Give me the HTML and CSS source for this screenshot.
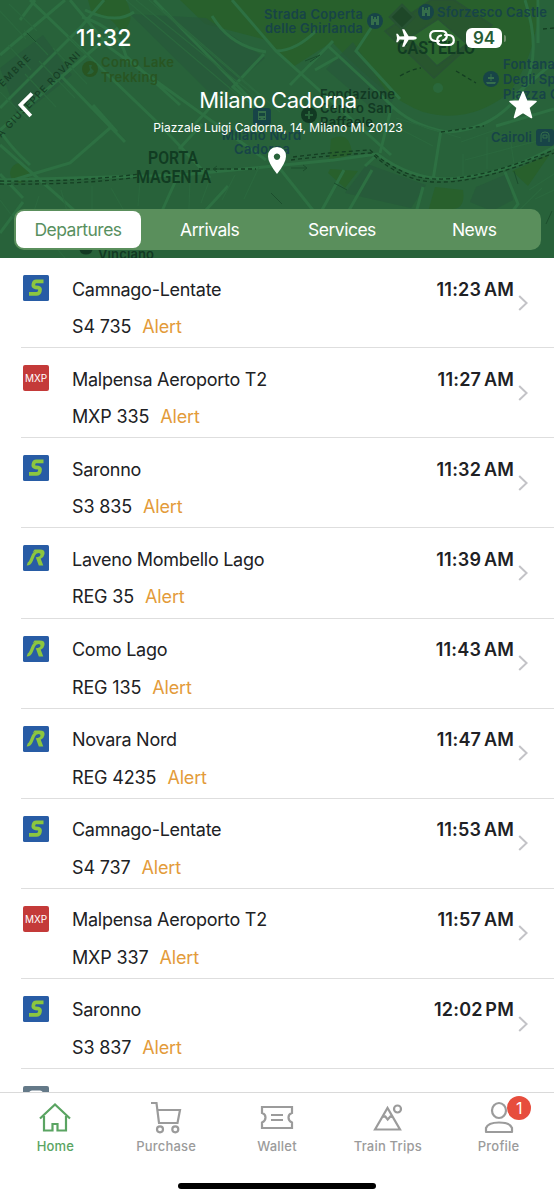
FILE: index.html
```
<!DOCTYPE html>
<html lang="en">
<head>
<meta charset="utf-8">
<title>Milano Cadorna</title>
<link rel="stylesheet" href="styles.css">
</head>
<body>
<svg width="0" height="0" class="symbols" aria-hidden="true">
  <symbol id="chevron" viewBox="0 0 10 18"><path d="M1.2 2 L8.600 9 L1.200 16" fill="none" stroke="#c3c3c7" stroke-width="2"/></symbol>
  <symbol id="line-s" viewBox="0 0 26 26"><rect width="26" height="26" rx="1.5" fill="#285ca5"/><path d="M20.500 6.400 H13.200 Q11 6.400 10.400 9.300 Q9.800 12 12.600 12.300 L15.200 12.700 Q17.600 13.100 16.900 15.800 Q16.300 18.800 13.500 18.800 H6" fill="none" stroke="#8cc63f" stroke-width="3.700"/></symbol>
  <symbol id="line-r" viewBox="0 0 26 26"><rect width="26" height="26" rx="1.5" fill="#285ca5"/><path d="M11.500 4.600 H17 Q22.200 4.600 21.500 9 Q20.900 12.500 17.700 13.800 L20.300 20.600 H15.800 L12.800 12.200 Q17.200 12 17.500 9.800 Q17.700 8 15.500 8 Q13 8 12 10.500 L9.700 16 Q7.800 20.600 3.700 20.600 L4.800 17.300 Q5.900 16.800 6.700 14.700 L9 9.300 Q10 7 12.200 6.200 Q10.500 6.500 9.600 7.300Z" fill="#8cc63f"/></symbol>
</svg>
<div class="phone">
  <header class="header">
    <svg class="map" viewBox="0 0 554 258" preserveAspectRatio="none" aria-hidden="true">
      <rect width="554" height="258" fill="#28623a"/>
      <g fill="#28602c">
        <path d="M180 0 H540 Q536 55 510 92 Q470 125 423 112 Q385 98 332 42 L293 67 L267 40 L205 24Z"/>
        <path d="M88 0 H126 Q137 23 121 32 Q108 12 92 14Z"/>
        <circle cx="20" cy="173" r="10"/>
        <path d="M331 139 Q350 130 352 154 L329 162Z M330 169 L358 171 L345 188 L328 173Z M435 187 L463 190 Q466 210 450 209 L446 226 H424Z M512 171 L550 154 L528 186Z"/>
      </g>
      <g fill="#27583a" opacity=".7">
        <path d="M367 164 L426 185 L411 208 L345 193Z M476 187 L507 174 L513 200 L492 211 L470 202Z M206 18 L265 58 L217 100 L130 14Z M0 68 L43 35 L72 75 L18 118Z M353 42 L326 69 L375 111 L393 101Z"/>
      </g>
      <g fill="none" stroke="#2d7042" stroke-width="3">
        <path d="M30 0 L160 125 L210 178 M70 0 L110 48 L266 160 M82 17 Q119 29 126 56 L180 105 M0 55 L65 0 M0 108 L80 28 L104 0 M0 130 L118 28 M60 75 L125 142 M93 105 L117 132 M0 145 L32 173 L83 218 M35 0 L20 20 M0 174 L23 198 M23 202 L0 233 M110 128 L70 163 L36 173 L0 184 M85 10 Q116 25 134 12 M154 0 L224 72 L264 113 M264 54 L233 87 L265 115 M232 0 L276 51 L391 155 M212 16 Q230 46 266 52 M333 41 L290 85 M315 70 L338 57"/>
        <path d="M276 51 Q296 51 317 30 M0 180 L182 175 L334 160 L377 154 Q412 180 449 179 Q505 175 554 147 M277 165 L320 219 M344 170 L317 219 M372 170 L344 219 M423 187 L413 224 M176 180 L157 222 M505 172 L518 204 L496 233 M378 154 L365 166 M392 105 L380 153 M441 130 L433 180 M496 126 L554 109 M525 0 Q543 55 522 91 Q495 130 447 132 Q410 126 387 101 L328 46 M538 0 V43 M515 95 L554 62 M430 0 L439 19 M373 25 L356 51 L400 99 M30 165 Q8 145 0 130 M195 124 L225 91 M179 149 L202 124 M228 186 L195 222"/>
      </g>
      <g fill="none" stroke="#2b683e" stroke-width="1.2">
        <path d="M126 0 L239 96 M136 0 L250 92 M149 0 L260 96 M163 10 L280 112 M8 45 L31 70 M24 30 L48 55 M0 92 L28 120 M25 74 L56 107 M39 61 L75 98 M53 48 L87 84 M68 36 L104 73 M0 11 L26 39 M9 4 L37 31 M39 196 L32 217 L54 223 M61 190 L69 218 M92 186 V210 L107 214 M111 188 L123 209 M140 182 L138 206 M190 178 L189 209 M210 179 L201 203 M235 175 L222 200 M259 167 L244 199 M396 118 L461 138 M402 130 L433 146 M461 142 L495 130 M465 160 L545 139 M463 154 V181 M487 137 V169 M510 137 L514 164 M529 190 L554 174 M535 199 L554 190 M510 219 L542 188 M0 200 L32 242 M37 225 L65 258"/>
      </g>
      <g stroke="#285333" stroke-width="1.6">
        <path d="M434 78 L385 31 L431 0 H454 L492 25Z" fill="#28562e"/>
        <path d="M437 66 L409 38 L438 19 L467 44Z" fill="#2c672f"/>
        <path d="M402 5 L414 17 L402 29 L390 17Z" fill="#1e4728" stroke-width="2.5"/>
      </g>
      <circle cx="438" cy="88" r="5" fill="#2a683b"/>
      <g fill="none" stroke="#143e22" stroke-width="1.3" stroke-dasharray="4 3">
        <path d="M0 181 Q80 182 139 174 M0 184 Q80 185 139 177 M199 169 L256 169 M291 160 Q332 155 371 153 Q404 183 439 182 Q479 183 554 153 M293 157 Q332 152 370 150 Q404 180 439 179 Q479 180 554 150 M400 76 Q412 69 421 68 M456 71 L476 83 M441 132 L484 126 M543 29 L554 28"/>
      </g>
      <g fill="none" stroke="#1c4e2d" stroke-width="1">
        <path d="M305 61 L320 55 M310 62 L320 55 M213 169 H230 M217 166 L213 169 L217 172 M291 168 H307 M303 165 L307 168 L303 171 M271 193 L282 204 M334 183 L347 190 M514 171 L518 184 M546 224 L552 211 M27 33 L36 42"/>
      </g>
      <g class="map-street">
        <text transform="translate(-3 93) rotate(-45)" textLength="48">TEMBRE</text>
        <text transform="translate(1 138) rotate(-46)" textLength="115">A GIUSEPPE ROVANI</text>
      </g>
      <g class="map-district">
        <text x="148" y="164" textLength="50" lengthAdjust="spacingAndGlyphs">PORTA</text>
        <text x="136" y="183" textLength="75" lengthAdjust="spacingAndGlyphs">MAGENTA</text>
        <text x="397" y="54" textLength="78" lengthAdjust="spacingAndGlyphs">CASTELLO</text>
      </g>
      <g class="map-place map-place-olive">
        <text x="101" y="67" textLength="73">Como Lake</text>
        <text x="101" y="82" textLength="57">Trekking</text>
        <circle cx="90" cy="69" r="8"/>
      </g>
      <path d="M89 65 h3 l-1 3 3 3 q-2 4 -7 3 l3 -4z" fill="#28623a"/>
      <g class="map-place map-place-blue">
        <text x="264" y="19" textLength="99">Strada Coperta</text>
        <text x="265" y="33" textLength="98">delle Ghirlanda</text>
        <circle cx="375" cy="21" r="8"/>
        <text x="437" y="17" textLength="110">Sforzesco Castle</text>
        <circle cx="426" cy="12" r="8"/>
        <text x="503" y="69" textLength="52">Fontana</text>
        <text x="503" y="84" textLength="68">Degli Spec</text>
        <text x="503" y="99" textLength="72">Piazza Cas</text>
        <circle cx="491" cy="79" r="8"/>
        <text x="491" y="142" textLength="41">Cairoli</text>
        <rect x="536" y="129" width="18" height="17" rx="3"/>
        <text x="222" y="140" textLength="79">Milano Nord</text>
        <text x="234" y="154" textLength="56">Cadorna</text>
        <rect x="253" y="108" width="18" height="17" rx="3"/>
      </g>
      <g fill="#356e4b">
        <path d="M371 16h2v3h1v-2h2v2h1v-3h2v9h-3v-3h-2v3h-3z M422 7h2v3h1v-2h2v2h1v-3h2v9h-3v-3h-2v3h-3z M486 82h10l-1 2h-8z M488 77h6v2h-6z M490.500 74h1v7h-1z"/>
        <path d="M258 111h8v9h-8z"/>
      </g>
      <path d="M259 113h6v3h-6z M259 118h1.500v1h-1.500z M263.500 118h1.500v1h-1.500z" fill="#17463f"/>
      <path d="M541 142 v-7 q0 -3 4 -3 t4 3 v7 M543 135h4v3h-4z" fill="none" stroke="#356e4b"/>
      <g class="map-place map-place-dark">
        <text x="320" y="99" textLength="75">Fondazione</text>
        <text x="320" y="113" textLength="72">Centro San</text>
        <text x="320" y="127" textLength="53">Raffaele</text>
        <circle cx="309" cy="115" r="8"/>
        <text x="98" y="259" textLength="56">Vinciano</text>
        <path d="M79 249h14l-2 4q-5 3-10 0z"/>
      </g>
      <path d="M308 111h2v3h3v2h-3v3h-2v-3h-3v-2h3z" fill="#28623a"/>
    </svg>

    <div class="status">
      <span class="clock">11:32</span>
      <div class="status-icons">
        <svg width="23" height="20" viewBox="0 0 23 20"><path d="M22 10 Q21.500 11.700 18.500 11.700 H13.700 L9.300 18.700 H7.100 L9.300 11.700 L4.700 11.500 L2.800 14.200 H1.200 L2 10 L1.200 5.800 H2.800 L4.700 8.500 L9.300 8.300 L7.100 1.300 H9.300 L13.700 8.300 H18.500 Q21.500 8.300 22 10Z" fill="#fff"/></svg>
        <svg width="26" height="18" viewBox="0 0 26 18"><path d="M10 12 H6.500 Q1.200 11.700 1.200 6.700 Q1.200 2 6.500 2 H12.500 Q17.800 2 17.800 6.800 Q17.800 10.500 14 11.500 M16 6 H19.500 Q24.800 6.300 24.800 11.300 Q24.800 16 19.500 16 H13.500 Q8.200 16 8.200 11.200 Q8.200 7.500 12 6.500" fill="none" stroke="#fff" stroke-width="2.200" stroke-linecap="round"/></svg>
        <div class="battery"><span class="battery-level">94</span><span class="battery-tip"></span></div>
      </div>
    </div>

    <div class="nav">
      <svg class="back" width="16" height="26" viewBox="0 0 16 26"><path d="M14 1.500 L2.500 13 L12.800 24" fill="none" stroke="#fff" stroke-width="3.800"/></svg>
      <div class="station">
        <h1 class="station-name">Milano Cadorna</h1>
        <p class="address">Piazzale Luigi Cadorna, 14, Milano MI 20123</p>
      </div>
      <svg class="star" width="30" height="30" viewBox="0 0 30 30"><path d="M15 2 L18.700 11 L28 11.500 L20.800 17.600 L23.500 27.500 L15 22.200 L6.500 27.500 L9.200 17.600 L2 11.500 L11.300 11Z" fill="#fff" stroke="#fff" stroke-width="1.600" stroke-linejoin="round"/></svg>
    </div>
    <svg class="pin" width="20" height="27" viewBox="0 0 20 27"><path fill-rule="evenodd" d="M10 0 Q19 .5 19 9.500 Q19 15.500 10 27 Q1 15.500 1 9.500 Q1 .5 10 0Z M10 6.500 a3.200 3.200 0 1 0 .01 0Z" fill="#fff"/></svg>

    <nav class="segments">
      <span class="segment segment-active">Departures</span>
      <span class="segment">Arrivals</span>
      <span class="segment">Services</span>
      <span class="segment">News</span>
    </nav>
  </header>

  <main class="list">
    <article class="row"><svg class="badge"><use href="#line-s"/></svg><div class="info"><div class="dest">Camnago-Lentate</div><div class="train">S4 735<span class="alert">Alert</span></div></div><time class="time">11:23 AM</time><svg class="chevron"><use href="#chevron"/></svg></article>
    <article class="row"><span class="badge badge-mxp">MXP</span><div class="info"><div class="dest">Malpensa Aeroporto T2</div><div class="train">MXP 335<span class="alert">Alert</span></div></div><time class="time">11:27 AM</time><svg class="chevron"><use href="#chevron"/></svg></article>
    <article class="row"><svg class="badge"><use href="#line-s"/></svg><div class="info"><div class="dest">Saronno</div><div class="train">S3 835<span class="alert">Alert</span></div></div><time class="time">11:32 AM</time><svg class="chevron"><use href="#chevron"/></svg></article>
    <article class="row"><svg class="badge"><use href="#line-r"/></svg><div class="info"><div class="dest">Laveno Mombello Lago</div><div class="train">REG 35<span class="alert">Alert</span></div></div><time class="time">11:39 AM</time><svg class="chevron"><use href="#chevron"/></svg></article>
    <article class="row"><svg class="badge"><use href="#line-r"/></svg><div class="info"><div class="dest">Como Lago</div><div class="train">REG 135<span class="alert">Alert</span></div></div><time class="time">11:43 AM</time><svg class="chevron"><use href="#chevron"/></svg></article>
    <article class="row"><svg class="badge"><use href="#line-r"/></svg><div class="info"><div class="dest">Novara Nord</div><div class="train">REG 4235<span class="alert">Alert</span></div></div><time class="time">11:47 AM</time><svg class="chevron"><use href="#chevron"/></svg></article>
    <article class="row"><svg class="badge"><use href="#line-s"/></svg><div class="info"><div class="dest">Camnago-Lentate</div><div class="train">S4 737<span class="alert">Alert</span></div></div><time class="time">11:53 AM</time><svg class="chevron"><use href="#chevron"/></svg></article>
    <article class="row"><span class="badge badge-mxp">MXP</span><div class="info"><div class="dest">Malpensa Aeroporto T2</div><div class="train">MXP 337<span class="alert">Alert</span></div></div><time class="time">11:57 AM</time><svg class="chevron"><use href="#chevron"/></svg></article>
    <article class="row"><svg class="badge"><use href="#line-s"/></svg><div class="info"><div class="dest">Saronno</div><div class="train">S3 837<span class="alert">Alert</span></div></div><time class="time">12:02 PM</time><svg class="chevron"><use href="#chevron"/></svg></article>
    <div class="row row-peek"><svg class="badge" viewBox="0 0 26 26"><rect width="26" height="26" rx="2" fill="#647988"/><path d="M6 8 Q6 4.500 9 4.500 H17 Q20 4.500 20 8 V20 H6Z" fill="#fff"/></svg></div>
  </main>

  <footer class="footer">
    <nav class="tabs">
      <a class="tab tab-active">
        <svg class="tab-icon" viewBox="0 0 34 34"><path d="M2 17.500 L17 3.500 L32 17.500 M6 15 V29.500 H14.500 V23 H19.500 V29.500 H28 V15" fill="none" stroke="currentColor" stroke-width="2.200"/></svg>
        <span>Home</span>
      </a>
      <a class="tab">
        <svg class="tab-icon" viewBox="0 0 34 34"><path d="M2 2 H7.500 L10 22 H28.500 L31 9 H8.500" fill="none" stroke="currentColor" stroke-width="2.200"/><circle cx="11" cy="28.300" r="3" fill="none" stroke="currentColor" stroke-width="2.200"/><circle cx="26.300" cy="28.300" r="3" fill="none" stroke="currentColor" stroke-width="2.200"/></svg>
        <span>Purchase</span>
      </a>
      <a class="tab">
        <svg class="tab-icon" viewBox="0 0 34 34"><path d="M2 6 H32 V12 Q28.500 13 28.500 16.500 Q28.500 20 32 21.500 V27 H2 V21.500 Q5.500 20 5.500 16.500 Q5.500 13 2 12Z M11 14 H23 M11 19 H23" fill="none" stroke="currentColor" stroke-width="2.200"/></svg>
        <span>Wallet</span>
      </a>
      <a class="tab">
        <svg class="tab-icon" viewBox="0 0 34 34"><path d="M4 28.500 L16.500 7 L29 28.500Z M11.500 15.800 L14.300 15.500 L16.700 18.500 L19.300 15.500 L22 16.300" fill="none" stroke="currentColor" stroke-width="2.200"/><circle cx="26.500" cy="8" r="3.500" fill="none" stroke="currentColor" stroke-width="2.200"/></svg>
        <span>Train Trips</span>
      </a>
      <a class="tab">
        <svg class="tab-icon" viewBox="0 0 34 34"><ellipse cx="17" cy="9.500" rx="7" ry="7.500" fill="none" stroke="currentColor" stroke-width="2.200"/><path d="M4 31 V27 Q6 21.500 17 21.500 Q28 21.500 30 27 V31Z" fill="none" stroke="currentColor" stroke-width="2.200" stroke-linejoin="round"/></svg>
        <span>Profile</span>
        <b class="count">1</b>
      </a>
    </nav>
    <div class="home-indicator"></div>
  </footer>
</div>
</body>
</html>
```
FILE: styles.css
```
* { box-sizing: border-box; }

body {
  margin: 0;
  background: #fff;
  color: #202124;
  font-family: Inter, "Liberation Sans", sans-serif;
}

.symbols { position: absolute; }

.phone {
  display: flex;
  flex-direction: column;
  width: 554px;
  height: 1200px;
  overflow: hidden;
}

/* Header with the map behind it */
.header {
  position: relative;
  display: flex;
  flex: none;
  flex-direction: column;
  align-items: center;
  height: 258px;
  overflow: hidden;
  color: #fff;
}

.map {
  position: absolute;
  inset: 0;
  width: 554px;
  height: 258px;
}

.header > :not(.map) { position: relative; }

.map-street { fill: #163e25; font-size: 9.5px; font-weight: 500; }
.map-district { fill: #113c22; font-family: "Roboto", sans-serif; font-size: 18px; font-weight: 600; }
.map-place { font-size: 13px; font-weight: 600; }
.map-place-olive { fill: #285522; }
.map-place-blue { fill: #174447; }
.map-place-dark { fill: #123923; }

.status {
  display: flex;
  align-items: center;
  justify-content: space-between;
  width: 100%;
  height: 28px;
  margin-top: 24px;
  padding: 0 48px 0 76px;
}

.clock { font-size: 23px; font-weight: 500; letter-spacing: 0.2px; }
.status-icons { display: flex; align-items: center; gap: 10px; }
.status-icons > svg { margin-right: 1px; }
.battery { display: flex; align-items: center; gap: 2px; }

.battery-level {
  width: 36px;
  height: 20px;
  border-radius: 6px;
  background: #fff;
  color: #285c35;
  font-size: 17px;
  font-weight: 600;
  line-height: 20px;
  text-align: center;
}

.battery-tip { width: 2px; height: 7px; border-radius: 0 2px 2px 0; background: #72906f; }

.nav {
  display: grid;
  grid-template-columns: 30px 1fr 30px;
  grid-template-rows: 30px;
  align-items: start;
  width: 100%;
  height: 30px;
  margin-top: 38px;
  padding: 0 16px 0 18px;
}

.back { margin-top: 2px; }
.station { height: 50px; margin-top: -3px; text-align: center; }
.station-name { margin: 0; font-size: 22px; font-weight: 400; letter-spacing: -0.5px; line-height: 26px; }
.address { margin: 8px 0 0; font-size: 12px; letter-spacing: 0.02px; line-height: 14px; }
.pin { margin-top: 27px; }

.segments {
  display: grid;
  grid-template-columns: 128px repeat(3, 132.3px);
  width: 527px;
  height: 41px;
  margin-top: 35px;
  padding: 2px 0 2px 2px;
  border-radius: 10px;
  background: #5a8f5c;
}

.segment { border-radius: 8px; font-size: 17.5px; letter-spacing: -0.5px; line-height: 37px; text-align: center; }
.segment-active { width: 125px; background: #fff; color: #589060; }

/* Departures */
.list { flex: 1; min-height: 0; padding-top: 0.2px; overflow: hidden; }

.row {
  display: flex;
  height: 90.1px;
  margin-left: 21px;
  padding: 17px 26px 0 2px;
  border-bottom: 1px solid #dedede;
}

.row-peek { border: 0; }
.badge { flex: none; width: 26px; height: 26px; }

.badge-mxp {
  border-radius: 2px;
  background: #c43a39;
  color: #fff;
  font-size: 10px;
  line-height: 27px;
  text-align: center;
}

.info { flex: 1; padding: 2.4px 0 0 23px; font-size: 18px; line-height: 24px; }
.dest { letter-spacing: -0.28px; }
.train { margin-top: 13.6px; letter-spacing: -0.15px; }
.alert { margin-left: 11px; color: #e39b3a; }
.time { padding-top: 2.4px; font-size: 18px; font-weight: 600; letter-spacing: 0.2px; line-height: 24px; word-spacing: -2px; }
.chevron { width: 10px; height: 18px; margin: 18.6px 0 0 4px; }

/* Tab bar */
.footer {
  display: flex;
  flex: none;
  flex-direction: column;
  align-items: center;
  justify-content: space-between;
  height: 108px;
  padding-bottom: 11px;
  border-top: 1px solid #dadada;
  background: #fff;
}

.tabs { display: grid; grid-template-columns: repeat(5, 1fr); width: 554px; padding-top: 8px; }

.tab {
  position: relative;
  display: flex;
  flex-direction: column;
  align-items: center;
  gap: 3px;
  color: #9b9b9b;
  font-size: 13px;
  font-weight: 500;
  letter-spacing: 0.2px;
  line-height: 16px;
}

.tab-active { color: #5aa462; }
.tab-icon { width: 34px; height: 34px; }

.count {
  position: absolute;
  top: -5px;
  left: 64px;
  width: 24px;
  height: 24px;
  border-radius: 50%;
  background: #e74d3d;
  color: #fff;
  font-size: 16px;
  font-weight: 400;
  letter-spacing: 0;
  line-height: 24px;
  text-align: center;
}

.home-indicator { width: 198px; height: 6px; border-radius: 3px; background: #000; }
```
